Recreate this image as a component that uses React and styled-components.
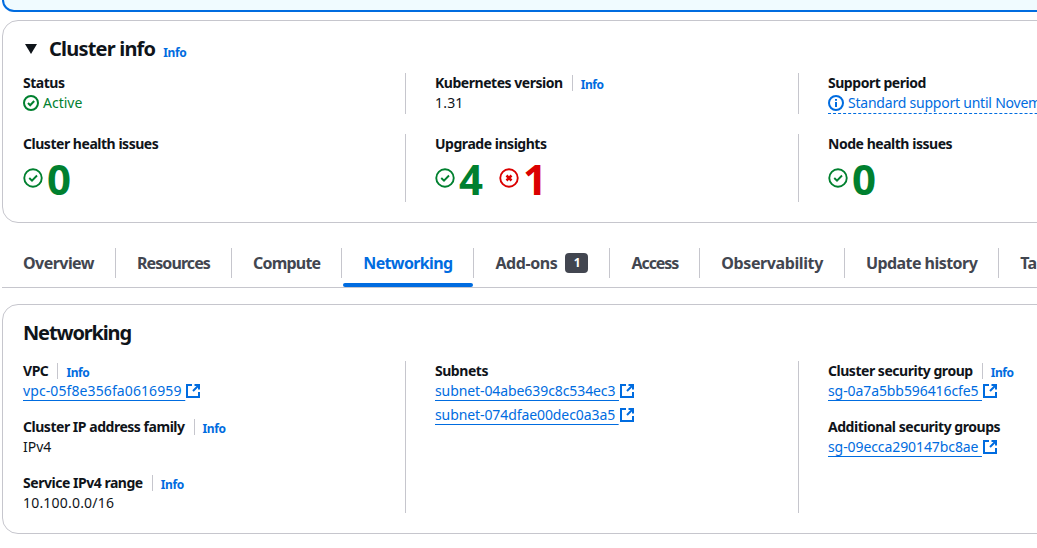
import styled, { createGlobalStyle } from "styled-components";

const GlobalStyle = createGlobalStyle`
  html, body {
    margin: 0;
    padding: 0;
    background: #ffffff;
    overflow: hidden;
  }
  body {
    font-family: "Noto Sans", "Open Sans", sans-serif;
    font-size: 14px;
    line-height: 20px;
    color: #0f141a;
  }
`;

const Page = styled.div`
  width: 1240px;
  padding-left: 2px;
  display: flex;
  flex-direction: column;
`;

const Banner = styled.div`
  height: 10px;
  background: #f0fbff;
  border: 2px solid #006ce0;
  border-top: none;
  border-radius: 0 0 16px 16px;
`;

const Card = styled.section`
  margin-top: 8px;
  padding: 16px 20px 20px;
  background: #ffffff;
  border: 1px solid #c6c6cd;
  border-radius: 16px;
`;

const CardHeader = styled.div`
  display: flex;
  align-items: center;
  height: 24px;
  margin-bottom: ${(p) => p.$space || "12px"};
`;

const Caret = styled.svg`
  width: 16px;
  height: 16px;
  margin-right: 10px;
  fill: #0f141a;
`;

const Title = styled.h2`
  margin: 0;
  font-size: 20px;
  line-height: 24px;
  font-weight: 700;
  letter-spacing: -0.8px;
`;

const NetworkTitle = styled(Title)`
  letter-spacing: -1.15px;
`;

const InfoLink = styled.a`
  font-size: 12px;
  line-height: 16px;
  font-weight: 700;
  letter-spacing: -0.4px;
  color: #006ce0;
  margin-left: ${(p) => (p.$tight ? "8px" : "0")};
  padding-top: ${(p) => (p.$tight ? "8px" : "4px")};
`;

const Grid = styled.div`
  display: grid;
  grid-template-columns: 382px 393px 393px;
  row-gap: 20px;
`;

const Cell = styled.div`
  padding-left: ${(p) => (p.$first ? "0" : "29px")};
  border-left: ${(p) => (p.$first ? "none" : "1px solid #c6c6cd")};
  min-height: ${(p) => p.$minHeight || "0"};
  display: flex;
  flex-direction: column;
  gap: ${(p) => p.$gap || "0"};
`;

const Field = styled.div`
  display: flex;
  flex-direction: column;
`;

const Label = styled.div`
  display: flex;
  align-items: center;
  height: 20px;
  font-weight: 700;
  letter-spacing: -0.47px;
`;

const LabelDivider = styled.span`
  width: 1px;
  height: 16px;
  margin: 0 8px 0 9px;
  background: #c6c6cd;
`;

const Value = styled.div`
  height: 20px;
  color: ${(p) => p.$color || "#0f141a"};
  letter-spacing: ${(p) => (p.$numeric ? "0.2px" : "0")};
  display: flex;
  align-items: center;
  gap: 4px;
`;

const SupportLink = styled.div`
  height: 20px;
  width: 260px;
  display: flex;
  align-items: center;
  gap: 4px;
  color: #006ce0;
  letter-spacing: -0.22px;
  white-space: nowrap;
  border-bottom: 1px dashed #006ce0;
`;

const Metrics = styled.div`
  box-sizing: border-box;
  display: flex;
  align-items: center;
  height: 48px;
  padding-top: 2px;
  gap: 16px;
`;

const Metric = styled.div`
  display: flex;
  align-items: center;
  gap: 4px;
  color: ${(p) => p.$color};

  svg {
    margin-bottom: 2px;
  }
`;

const MetricNumber = styled.span`
  font-size: 42px;
  line-height: 48px;
  font-weight: 700;
`;

const Glyph = styled.svg`
  flex: none;
  width: ${(p) => p.$size}px;
  height: ${(p) => p.$size}px;
  fill: none;
  stroke: currentColor;
  stroke-width: ${(p) => p.$weight || 2};
`;

const TabBar = styled.nav`
  display: flex;
  margin-top: 25px;
  border-bottom: 1px solid #c6c6cd;
  white-space: nowrap;
`;

const Tab = styled.div`
  position: relative;
  display: flex;
  align-items: center;
  gap: ${(p) => (p.$badge ? "8px" : "0")};
  height: 30px;
  margin-bottom: 9px;
  padding: 0 21px;
  border-right: 1px solid #c6c6cd;
  font-size: 16px;
  line-height: 20px;
  font-weight: 700;
  letter-spacing: ${(p) => p.$tracking || "-0.55px"};
  color: ${(p) => (p.$active ? "#006ce0" : "#424650")};

  ${(p) =>
    p.$active &&
    `&::after {
      content: "";
      position: absolute;
      left: 1px;
      right: 0;
      bottom: -9px;
      height: 4px;
      border-radius: 2px;
      background: #006ce0;
    }`}
`;

const Badge = styled.span`
  display: inline-flex;
  align-items: center;
  justify-content: center;
  width: 23px;
  height: 20px;
  border-radius: 4px;
  background: #424650;
  color: #ffffff;
  font-size: 12px;
  line-height: 16px;
`;

const NetworkCard = styled(Card)`
  margin-top: 16px;
`;

const LinkList = styled.div`
  display: flex;
  flex-direction: column;
  gap: 4px;
`;

const LinkRow = styled.div`
  display: flex;
  align-items: center;
  height: 20px;
  color: #006ce0;
`;

const ResourceLink = styled.a`
  white-space: pre;
  color: #006ce0;
  letter-spacing: ${(p) => p.$tracking || "-0.09px"};
  text-decoration: underline;
  text-decoration-thickness: 1px;
  text-decoration-skip-ink: none;
  text-underline-offset: 4px;
`;

const CheckCircle = ({ size }) => (
  <Glyph $size={size} $weight={size > 16 ? 1.5 : 2} viewBox="0 0 16 16">
    <circle cx="8" cy="8" r="7" />
    <path d="M5 8l2.2 2.2L11.2 6" />
  </Glyph>
);

const CrossCircle = ({ size }) => (
  <Glyph $size={size} $weight={size > 16 ? 1.5 : 2} viewBox="0 0 16 16">
    <circle cx="8" cy="8" r="7" />
    <path strokeWidth="2" d="M6 6l4 4M10 6l-4 4" />
  </Glyph>
);

const InfoCircle = () => (
  <Glyph $size={16} viewBox="0 0 16 16">
    <circle cx="8" cy="8" r="7" />
    <path d="M8 7v5M8 4v1.8" />
  </Glyph>
);

const External = () => (
  <Glyph $size={16} viewBox="0 0 16 16">
    <path d="M7 2H2v12h12V9" />
    <path d="M8 8l6-6M9.5 2H14v4.5" />
  </Glyph>
);

const Resource = ({ id, tracking }) => (
  <LinkRow>
    <ResourceLink $tracking={tracking}>{id + "\u00a0"}</ResourceLink>
    <External />
  </LinkRow>
);

const FieldLabel = ({ text, info }) => (
  <Label>
    {text}
    {info && (
      <>
        <LabelDivider />
        <InfoLink>Info</InfoLink>
      </>
    )}
  </Label>
);

const tabs = [
  { name: "Overview" },
  { name: "Resources", tracking: "-0.9px" },
  { name: "Compute", tracking: "-0.8px" },
  { name: "Networking", tracking: "-0.65px" },
  { name: "Add-ons", tracking: "-0.4px" },
  { name: "Access", tracking: "-1.05px" },
  { name: "Observability", tracking: "-0.4px" },
  { name: "Update history" },
  { name: "Tags" },
];

const App = () => {
  return (
    <>
      <GlobalStyle />
      <Page>
        <Banner />
        <Card>
          <CardHeader>
            <Caret viewBox="0 0 16 16">
              <path d="M2 3h12L8 13z" />
            </Caret>
            <Title>Cluster info</Title>
            <InfoLink $tight>Info</InfoLink>
          </CardHeader>
          <Grid>
            <Cell $first>
              <FieldLabel text="Status" />
              <Value $color="#00802f">
                <CheckCircle size={16} />
                Active
              </Value>
            </Cell>
            <Cell $minHeight="41px">
              <FieldLabel text="Kubernetes version" info />
              <Value $numeric>1.31</Value>
            </Cell>
            <Cell>
              <FieldLabel text="Support period" />
              <SupportLink>
                <InfoCircle />
                Standard support until November 2025
              </SupportLink>
            </Cell>
            <Cell $first>
              <FieldLabel text="Cluster health issues" />
              <Metrics>
                <Metric $color="#00802f">
                  <CheckCircle size={20} />
                  <MetricNumber>0</MetricNumber>
                </Metric>
              </Metrics>
            </Cell>
            <Cell>
              <FieldLabel text="Upgrade insights" />
              <Metrics>
                <Metric $color="#00802f">
                  <CheckCircle size={20} />
                  <MetricNumber>4</MetricNumber>
                </Metric>
                <Metric $color="#db0000">
                  <CrossCircle size={20} />
                  <MetricNumber>1</MetricNumber>
                </Metric>
              </Metrics>
            </Cell>
            <Cell>
              <FieldLabel text="Node health issues" />
              <Metrics>
                <Metric $color="#00802f">
                  <CheckCircle size={20} />
                  <MetricNumber>0</MetricNumber>
                </Metric>
              </Metrics>
            </Cell>
          </Grid>
        </Card>
        <TabBar>
          {tabs.map((tab) => (
            <Tab
              key={tab.name}
              $tracking={tab.tracking}
              $active={tab.name === "Networking"}
              $badge={tab.name === "Add-ons"}
            >
              {tab.name}
              {tab.name === "Add-ons" && <Badge>1</Badge>}
            </Tab>
          ))}
        </TabBar>
        <NetworkCard>
          <CardHeader $space="16px">
            <NetworkTitle>Networking</NetworkTitle>
          </CardHeader>
          <Grid>
            <Cell $first $gap="16px">
              <Field>
                <FieldLabel text="VPC" info />
                <Resource id="vpc-05f8e356fa0616959" tracking="0.1px" />
              </Field>
              <Field>
                <FieldLabel text="Cluster IP address family" info />
                <Value>IPv4</Value>
              </Field>
              <Field>
                <FieldLabel text="Service IPv4 range" info />
                <Value $numeric>10.100.0.0/16</Value>
              </Field>
            </Cell>
            <Cell>
              <FieldLabel text="Subnets" />
              <LinkList>
                <Resource id="subnet-04abe639c8c534ec3" />
                <Resource id="subnet-074dfae00dec0a3a5" />
              </LinkList>
            </Cell>
            <Cell $gap="16px">
              <Field>
                <FieldLabel text="Cluster security group" info />
                <Resource id="sg-0a7a5bb596416cfe5" />
              </Field>
              <Field>
                <FieldLabel text="Additional security groups" />
                <Resource id="sg-09ecca290147bc8ae" />
              </Field>
            </Cell>
          </Grid>
        </NetworkCard>
      </Page>
    </>
  );
};

export default App;
